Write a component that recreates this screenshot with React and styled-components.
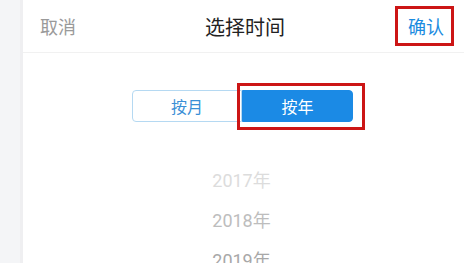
import React from "react";
import styled, { createGlobalStyle } from "styled-components";

const Global = createGlobalStyle`
  html, body {
    margin: 0;
    padding: 0;
    background: #f4f5f7;
    font-family: "Noto Sans CJK SC", "Noto Sans", sans-serif;
  }
`;

const Page = styled.div`
  display: flex;
  width: 464px;
  height: 263px;
  overflow: hidden;
`;

const Side = styled.div`
  width: 20px;
  background: #f4f5f7;
  border-right: 3px solid #efeff1;
`;

const Panel = styled.div`
  flex: 1;
  background: #fff;
  display: flex;
  flex-direction: column;
  & > * {
    flex-shrink: 0;
  }
`;

const Header = styled.div`
  height: 52px;
  display: grid;
  grid-template-columns: 1fr auto 1fr;
  align-items: center;
  padding: 0 10px 0 17px;
  border-bottom: 1px solid #f1f1f1;
`;

const Cancel = styled.span`
  justify-self: start;
  font-size: 18px;
  color: #9a9a9a;
`;

const Title = styled.span`
  font-size: 20px;
  color: #222;
  margin-right: 4px;
`;

const Marked = styled.span`
  position: relative;
  justify-self: end;
`;

const Confirm = styled.span`
  display: block;
  font-size: 18px;
  line-height: 26px;
  color: #1a8be0;
  padding: 0 10px 0 13px;
`;

const RedBox = styled.span`
  position: absolute;
  top: ${(p) => p.$t}px;
  left: ${(p) => p.$l}px;
  right: ${(p) => p.$r}px;
  bottom: ${(p) => p.$b}px;
  border: 3px solid #cc1515;
  pointer-events: none;
`;

const Segment = styled.div`
  display: flex;
  margin: 37px auto 0;
  transform: translateX(-1px);
`;

const SegButton = styled.div`
  position: relative;
  width: ${(p) => (p.$active ? 111 : 110)}px;
  height: 32px;
  display: flex;
  align-items: center;
  justify-content: center;
  font-size: 16px;
  box-sizing: border-box;
  color: ${(p) => (p.$active ? "#fff" : "#3a8fd6")};
  background: ${(p) => (p.$active ? "#1b8ae5" : "#fff")};
  border: 1px solid ${(p) => (p.$active ? "#1b8ae5" : "#b5d9f2")};
  border-radius: ${(p) => (p.$active ? "0 4px 4px 0" : "4px 0 0 4px")};
`;

const Years = styled.div`
  display: flex;
  flex-direction: column;
  align-items: center;
  margin-top: 39px;
  transform: translateX(-2px);
`;

const Year = styled.div`
  height: 40px;
  line-height: 40px;
  font-size: 18px;
  color: ${(p) => p.$c};
  font-family: "Roboto", "Noto Sans CJK SC", sans-serif;
`;

export default function App() {
  const years = [
    { y: "2017年", c: "#dcdcdc" },
    { y: "2018年", c: "#bdbdbd" },
    { y: "2019年", c: "#a8a8a8" },
  ];
  return (
    <>
      <Global />
      <Page>
        <Side />
        <Panel>
          <Header>
            <Cancel>取消</Cancel>
            <Title>选择时间</Title>
            <Marked>
              <Confirm>确认</Confirm>
              <RedBox $t={-7} $l={0} $r={0} $b={-7} />
            </Marked>
          </Header>
          <Segment>
            <SegButton>按月</SegButton>
            <SegButton $active>
              按年
              <RedBox $t={-8} $l={-6} $r={-13} $b={-9} />
            </SegButton>
          </Segment>
          <Years>
            {years.map((it) => (
              <Year key={it.y} $c={it.c}>
                {it.y}
              </Year>
            ))}
          </Years>
        </Panel>
      </Page>
    </>
  );
}
